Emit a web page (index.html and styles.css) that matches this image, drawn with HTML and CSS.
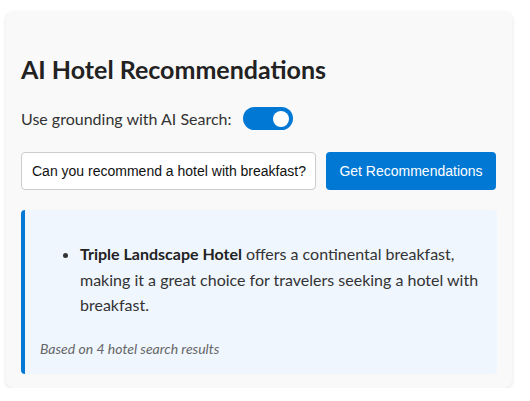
FILE: index.html
```html
<!DOCTYPE html>
<html>
<head>
<meta charset="utf-8">
<link rel="stylesheet" href="styles.css">
</head>
<body>
<div class="card">
  <h2 class="title">AI Hotel Recommendations</h2>
  <div class="toggle-row">
    <span class="toggle-label">Use grounding with AI Search:</span>
    <span class="switch"><span class="knob"></span></span>
  </div>
  <div class="query-row">
    <div class="query-input">Can you recommend a hotel with breakfast?</div>
    <button class="query-btn">Get Recommendations</button>
  </div>
  <div class="result">
    <ul class="result-list">
      <li><strong>Triple Landscape Hotel</strong> offers a continental breakfast, making it a great choice for travelers seeking a hotel with breakfast.</li>
    </ul>
    <p class="result-note">Based on 4 hotel search results</p>
  </div>
</div>
</body>
</html>
```
FILE: styles.css
```css
html, body {
  margin: 0;
  padding: 0;
  background: #ffffff;
}
body {
  padding: 12px 18px 0 6px;
  font-family: Lato, sans-serif;
  color: #333;
}
.card {
  background: #f9f9f9;
  border-radius: 8px;
  box-shadow: 0 1px 4px rgba(0,0,0,0.12);
  padding: 41px 15px 14px 15px;
}
.title {
  margin: 0 0 21px 0;
  font-size: 25px;
  line-height: 32px;
  font-weight: 700;
  color: #222;
}
.toggle-row {
  display: flex;
  align-items: center;
  gap: 11px;
  height: 24px;
  margin-bottom: 22px;
}
.toggle-label {
  font-size: 16px;
  color: #333;
}
.switch {
  width: 50px;
  height: 23px;
  border-radius: 12px;
  background: #0078d4;
  position: relative;
  display: inline-block;
}
.knob {
  position: absolute;
  right: 4px;
  top: 4px;
  width: 16px;
  height: 16px;
  border-radius: 50%;
  background: #fff;
}
.query-row {
  display: flex;
  gap: 10px;
  margin-bottom: 20px;
}
.query-input {
  width: 295px;
  box-sizing: border-box;
  height: 38px;
  border: 1px solid #ccc;
  border-radius: 4px;
  background: #fff;
  padding: 0 10px;
  display: flex;
  align-items: center;
  white-space: nowrap;
  overflow: hidden;
  font-family: "Liberation Sans", Arial, sans-serif;
  font-size: 14px;
  color: #111;
}
.query-btn {
  width: 170px;
  height: 38px;
  border: none;
  border-radius: 4px;
  background: #0078d4;
  color: #fff;
  font-family: "Liberation Sans", Arial, sans-serif;
  font-size: 14px;
  padding: 0;
}
.result {
  background: #eff6fe;
  border-left: 4px solid #0078d4;
  border-radius: 4px;
  padding: 15px 15px 15px 15px;
}
.result-list {
  margin: 16px 0 21px 0;
  padding-left: 40px;
  font-size: 16px;
  line-height: 25.6px;
  color: #333;
}
.result-list strong {
  color: #222;
}
.result-note {
  margin: 0;
  font-size: 14px;
  line-height: 20px;
  font-style: italic;
  color: #666;
}
```
